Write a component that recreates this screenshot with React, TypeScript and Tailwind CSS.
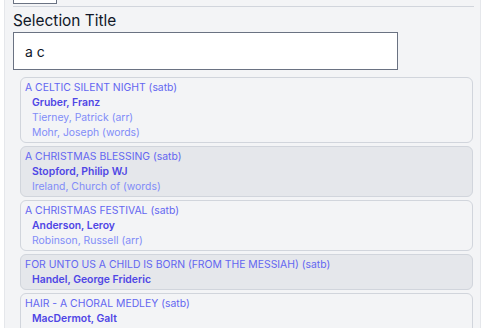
import React from "react";

type Item = {
  title: string;
  voicing: string;
  people: { name: string; role?: string }[];
};

const items: Item[] = [
  {
    title: "A CELTIC SILENT NIGHT",
    voicing: "satb",
    people: [
      { name: "Gruber, Franz" },
      { name: "Tierney, Patrick", role: "arr" },
      { name: "Mohr, Joseph", role: "words" },
    ],
  },
  {
    title: "A CHRISTMAS BLESSING",
    voicing: "satb",
    people: [
      { name: "Stopford, Philip WJ" },
      { name: "Ireland, Church of", role: "words" },
    ],
  },
  {
    title: "A CHRISTMAS FESTIVAL",
    voicing: "satb",
    people: [
      { name: "Anderson, Leroy" },
      { name: "Robinson, Russell", role: "arr" },
    ],
  },
  {
    title: "FOR UNTO US A CHILD IS BORN (FROM THE MESSIAH)",
    voicing: "satb",
    people: [{ name: "Handel, George Frideric" }],
  },
  {
    title: "HAIR - A CHORAL MEDLEY",
    voicing: "satb",
    people: [{ name: "MacDermot, Galt" }, { name: "Rado, James" }],
  },
];

function ResultCard({ item, shaded }: { item: Item; shaded: boolean }) {
  return (
    <div
      className={`rounded-md border border-gray-300 px-[4px] py-[2px] text-[10.4px] leading-[15px] ${
        shaded ? "bg-gray-200" : "bg-gray-100"
      }`}
    >
      <div className="text-[#6366f1]">
        {item.title} ({item.voicing})
      </div>
      {item.people.map((p, i) =>
        p.role ? (
          <div key={i} className="pl-[7px] text-[#818cf8]">
            {p.name} ({p.role})
          </div>
        ) : (
          <div key={i} className="pl-[7px] font-semibold text-[#4f46e5]">
            {p.name}
          </div>
        )
      )}
    </div>
  );
}

export default function App() {
  return (
    <div
      className="h-[328px] overflow-hidden bg-white"
      style={{ fontFamily: "Inter, 'Noto Sans', sans-serif" }}
    >
      <div className="ml-[4px] h-full w-[477px] border-x border-gray-200 bg-gray-100 pl-[8px] pr-[6px]">
        <div className="h-[4px] w-[44px] border-x border-b border-gray-500 bg-white" />
        <div className="mt-[2px] border-t border-gray-300" />
        <div className="mt-[3px] text-[15.4px] leading-[22px] text-gray-900">
          Selection Title
        </div>
        <input
          className="block h-[38px] w-[385px] border border-gray-500 bg-white px-[11px] text-sm text-gray-900 outline-none"
          defaultValue="a c"
        />
        <div className="ml-[7px] mr-[1px] mt-[7px] flex flex-col gap-[3px]">
          {items.map((item, i) => (
            <ResultCard key={i} item={item} shaded={i % 2 === 1} />
          ))}
        </div>
      </div>
    </div>
  );
}
